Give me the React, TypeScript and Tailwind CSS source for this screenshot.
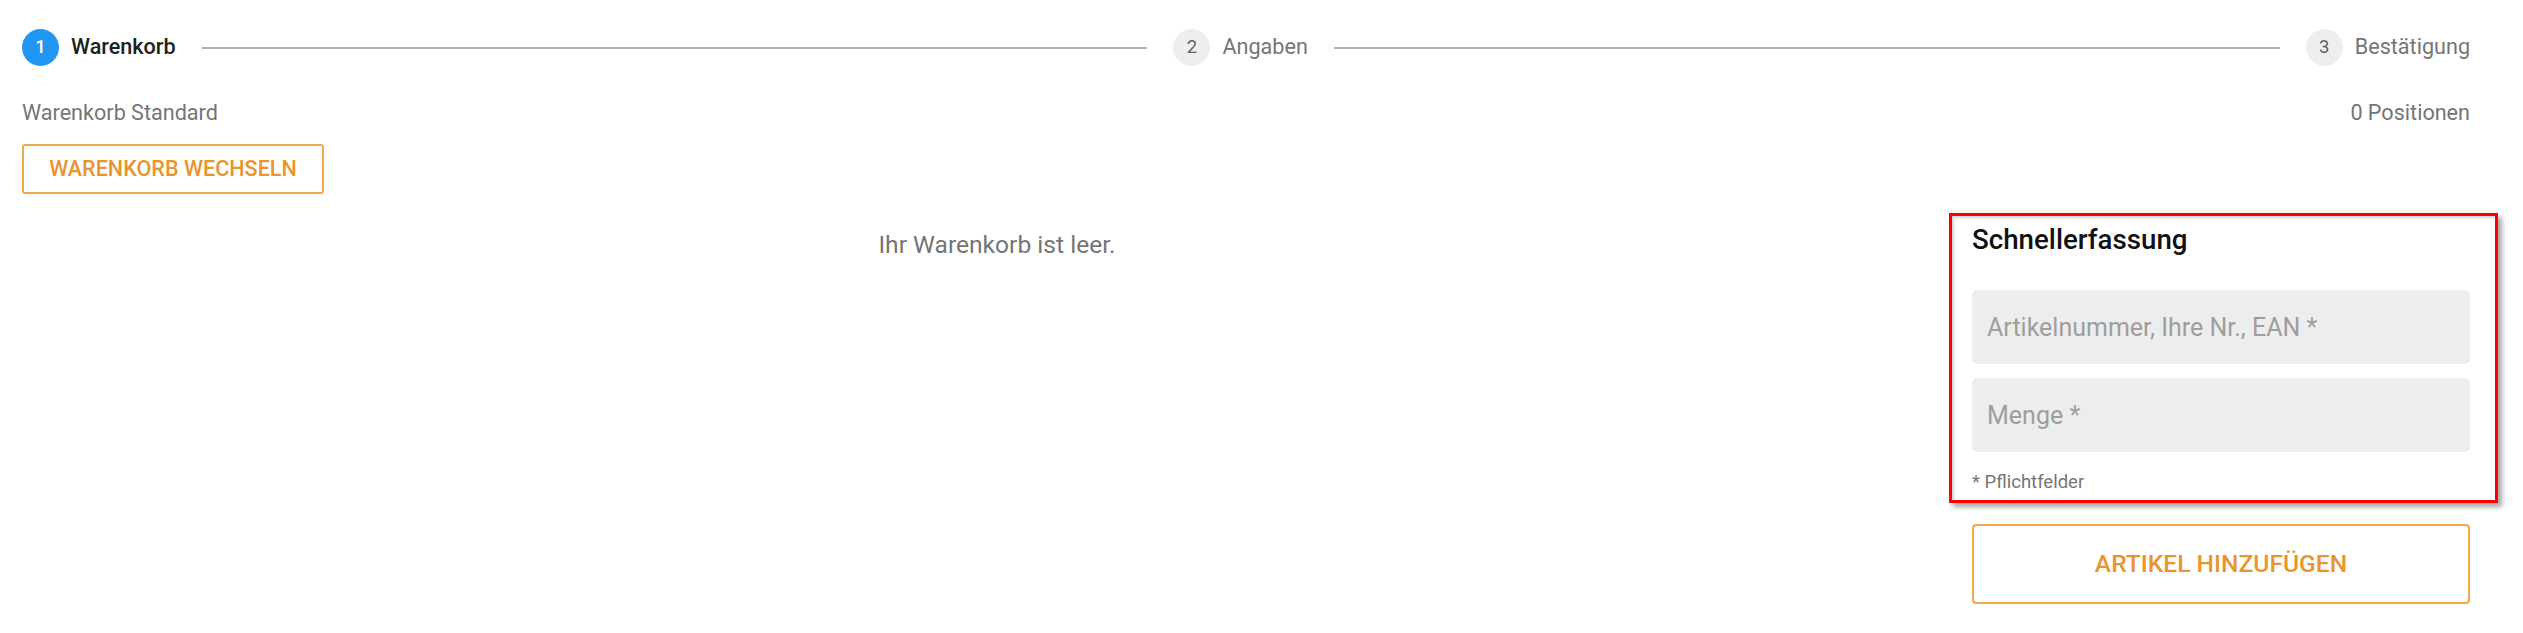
import React from "react";

const Step = ({ n, label, active }: { n: number; label: string; active?: boolean }) => (
  <div className="flex items-center gap-3 shrink-0">
    <span
      className={
        active
          ? "flex items-center justify-center w-[37px] h-[37px] rounded-full bg-[#2196f3] text-white text-[18.5px] font-medium"
          : "flex items-center justify-center w-[37px] h-[37px] rounded-full bg-[#eeeeee] text-[#616161] text-[18.5px]"
      }
    >
      {n}
    </span>
    <span
      className={
        active
          ? "text-[21.6px] font-medium text-[#212121]"
          : "text-[21.6px] text-[#757575]"
      }
    >
      {label}
    </span>
  </div>
);

const App = () => {
  return (
    <div className="w-[2523px] h-[633px] bg-white pl-[22px] pr-[53px] pt-[29px] font-['Roboto',sans-serif] overflow-hidden">
      {/* stepper */}
      <div className="flex items-center h-[37px]">
        <Step n={1} label="Warenkorb" active />
        <div className="flex-1 h-[2px] bg-[#b3b3b3] mx-[26px]"></div>
        <Step n={2} label="Angaben" />
        <div className="flex-1 h-[2px] bg-[#b3b3b3] mx-[26px]"></div>
        <Step n={3} label="Bestätigung" />
      </div>

      <div className="flex justify-between mt-[34px] text-[21.6px] leading-[26px] text-[#757575]">
        <span>Warenkorb Standard</span>
        <span>0 Positionen</span>
      </div>

      <button className="mt-[18px] w-[302px] h-[50px] border-2 border-[#f2a84c] rounded-[3px] text-[21.6px] font-medium text-[#e8952e] uppercase">
        Warenkorb wechseln
      </button>

      <div className="flex mt-[29px]">
        <div className="flex-1 flex justify-center pt-[7px]">
          <p className="text-[24.6px] leading-[30px] text-[#757575]">Ihr Warenkorb ist leer.</p>
        </div>

        <div className="w-[498px]">
          <div className="relative">
            <h3 className="text-[27.7px] leading-[33px] font-medium text-[#111111]">Schnellerfassung</h3>
            <input
              className="block mt-[34px] w-full h-[74px] rounded-[5px] bg-[#ededed] pl-[15px] text-[25px] text-[#424242] placeholder:text-[#9e9e9e] outline-none"
              placeholder="Artikelnummer, Ihre Nr., EAN *"
            />
            <input
              className="block mt-[14px] w-full h-[74px] rounded-[5px] bg-[#ededed] pl-[15px] text-[25px] text-[#424242] placeholder:text-[#9e9e9e] outline-none"
              placeholder="Menge *"
            />
            <p className="mt-[19px] text-[18.5px] leading-[22px] text-[#757575]">* Pflichtfelder</p>

            {/* red highlight frame */}
            <div className="absolute -left-[23px] -top-[10px] -right-[28px] -bottom-[10px] border-[3px] border-[#ff0000] pointer-events-none shadow-[inset_2px_2px_3px_rgba(0,0,0,0.18),4px_4px_5px_rgba(0,0,0,0.35)]"></div>
          </div>

          <button className="mt-[31px] w-full h-[80px] border-2 border-[#f2a84c] rounded-[4px] text-[24.6px] font-medium text-[#e8952e] uppercase">
            Artikel hinzufügen
          </button>
        </div>
      </div>
    </div>
  );
};

export default App;
